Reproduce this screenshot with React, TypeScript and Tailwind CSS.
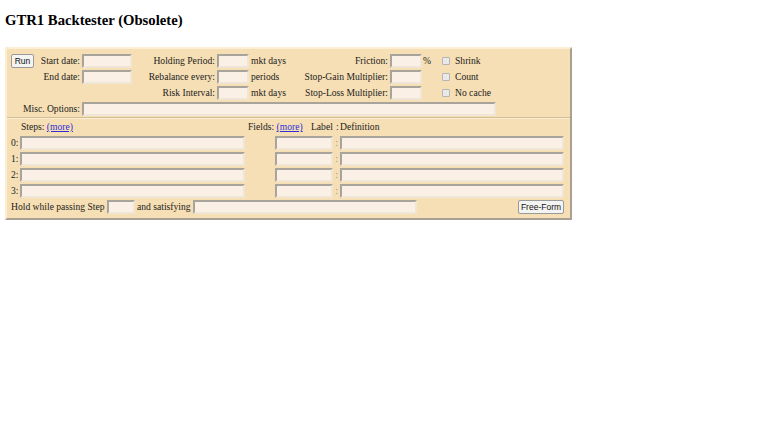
import React from 'react';

const serif = "font-['Liberation_Serif','Times_New_Roman',serif]";
const sans = "font-['Liberation_Sans',Arial,sans-serif]";

const Field = ({ w }: { w: string }) => (
  <span
    className={`block h-[14px] ${w} shrink-0 bg-[#faf0e6] border-2 border-t-[#a9a49b] border-l-[#a9a49b] border-b-[#efe6d6] border-r-[#efe6d6]`}
  />
);

const Btn = ({ label, w }: { label: string; w: string }) => (
  <span
    className={`flex items-center justify-center h-[14px] ${w} shrink-0 bg-[#f4f4f2] border border-[#9a9a9a] rounded-[2px] text-[8.5px] text-[#111] ${sans}`}
  >
    {label}
  </span>
);

const Check = ({ label }: { label: string }) => (
  <span className="flex items-center">
    <span className="block w-[8px] h-[8px] ml-[13px] mr-[5px] bg-[#e9e9e9] border border-[#b5b5b5] rounded-[1px]" />
    <span>{label}</span>
  </span>
);

const Label = ({ text, w }: { text: string; w: string }) => (
  <span className={`${w} shrink-0 text-right pr-[2px]`}>{text}</span>
);

const More = () => <span className="text-[#2f2fd8] underline">(more)</span>;

export default function App() {
  const steps = ['0:', '1:', '2:', '3:'];
  return (
    <div className={`min-h-[423px] bg-white text-[#222] text-[9.6px] ${serif}`}>
      <h1 className="ml-[5px] pt-[12px] text-[14.7px] leading-[17px] font-bold text-black">
        GTR1 Backtester (Obsolete)
      </h1>

      <div className="ml-[5px] mt-[18px] w-[567px] bg-[#f6dfb4] border-2 border-t-[#fbeed4] border-l-[#fbeed4] border-b-[#a8a092] border-r-[#a8a092]">
        {/* top options */}
        <div className="pl-[4px] pt-[4px]">
          <div className="flex items-center h-[16px]">
            <Btn label="Run" w="w-[23px]" />
            <Label text="Start date:" w="w-[48px]" />
            <Field w="w-[50px]" />
            <Label text="Holding Period:" w="w-[85px]" />
            <Field w="w-[32px]" />
            <span className="w-[51px] pl-[2px]">mkt days</span>
            <Label text="Friction:" w="w-[90px]" />
            <Field w="w-[32px]" />
            <span className="w-[7px] pl-[1px]">%</span>
            <Check label="Shrink" />
          </div>
          <div className="flex items-center h-[16px]">
            <span className="w-[23px] shrink-0" />
            <Label text="End date:" w="w-[48px]" />
            <Field w="w-[50px]" />
            <Label text="Rebalance every:" w="w-[85px]" />
            <Field w="w-[32px]" />
            <span className="w-[51px] pl-[2px]">periods</span>
            <Label text="Stop-Gain Multiplier:" w="w-[90px]" />
            <Field w="w-[32px]" />
            <span className="w-[7px]" />
            <Check label="Count" />
          </div>
          <div className="flex items-center h-[16px]">
            <span className="w-[121px] shrink-0" />
            <Label text="Risk Interval:" w="w-[85px]" />
            <Field w="w-[32px]" />
            <span className="w-[51px] pl-[2px]">mkt days</span>
            <Label text="Stop-Loss Multiplier:" w="w-[90px]" />
            <Field w="w-[32px]" />
            <span className="w-[7px]" />
            <Check label="No cache" />
          </div>
          <div className="flex items-center h-[16px]">
            <Label text="Misc. Options:" w="w-[71px]" />
            <Field w="w-[414px]" />
          </div>
        </div>

        {/* divider */}
        <div className="border-t border-t-[#d2bd97] border-b border-b-[#fbeed4]" />

        {/* steps & fields */}
        <div className="pl-[4px] pr-[6px] pb-[3px]">
          <div className="flex items-center h-[16px] pt-[1px]">
            <span className="w-[9px] shrink-0" />
            <span className="w-[228px] shrink-0 pl-[1px]">
              Steps: <More />
            </span>
            <span className="w-[63px] shrink-0">
              Fields: <More />
            </span>
            <span className="w-[25px] shrink-0">Label</span>
            <span className="w-[4px] shrink-0">:</span>
            <span>Definition</span>
          </div>
          {steps.map((s) => (
            <div key={s} className="flex items-center h-[16px]">
              <span className="w-[9px] shrink-0">{s}</span>
              <Field w="w-[225px]" />
              <span className="w-[30px] shrink-0" />
              <Field w="w-[58px]" />
              <span className="w-[7px] shrink-0 text-center text-[#9c8f78]">:</span>
              <Field w="w-[224px]" />
            </div>
          ))}
          <div className="flex items-center h-[16px]">
            <span className="w-[96px] shrink-0">Hold while passing Step</span>
            <Field w="w-[28px]" />
            <span className="w-[58px] shrink-0 pl-[2px]">and satisfying</span>
            <Field w="w-[224px]" />
            <span className="flex-1" />
            <Btn label="Free-Form" w="w-[46px]" />
          </div>
        </div>
      </div>
    </div>
  );
}
